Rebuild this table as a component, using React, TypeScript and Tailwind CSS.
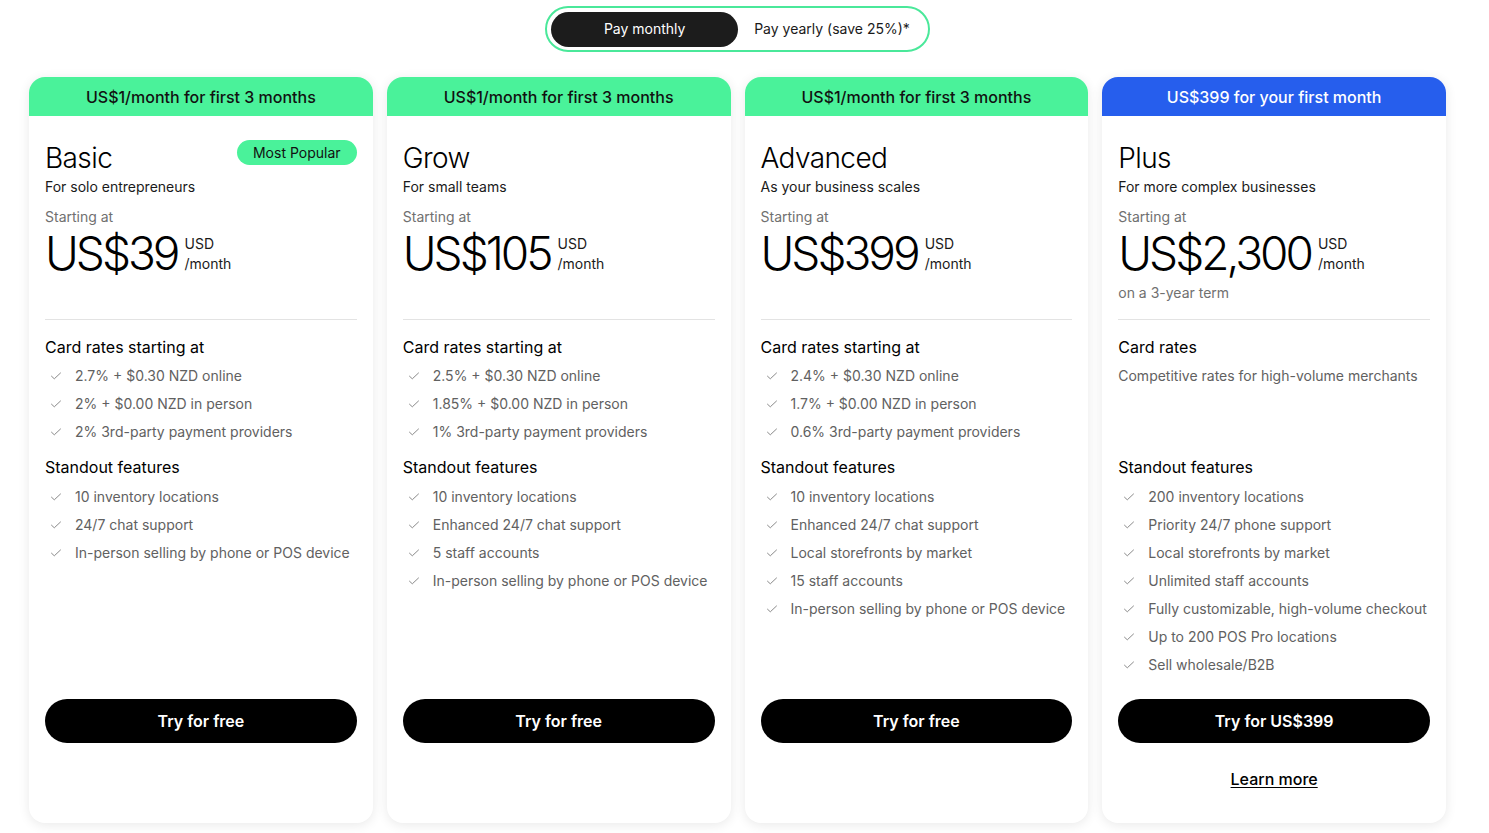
import type { ReactNode } from 'react';

interface Plan {
  banner: string;
  bannerBlue?: boolean;
  name: string;
  tagline: string;
  price: string;
  term?: string;
  popular?: boolean;
  ratesTitle: string;
  rates: string[];
  ratesNote?: string;
  features: string[];
  cta: string;
  learnMore?: boolean;
}

const PLANS: Plan[] = [
  {
    banner: 'US$1/month for first 3 months',
    name: 'Basic',
    tagline: 'For solo entrepreneurs',
    price: 'US$39',
    popular: true,
    ratesTitle: 'Card rates starting at',
    rates: ['2.7% + $0.30 NZD online', '2% + $0.00 NZD in person', '2% 3rd-party payment providers'],
    features: ['10 inventory locations', '24/7 chat support', 'In-person selling by phone or POS device'],
    cta: 'Try for free',
  },
  {
    banner: 'US$1/month for first 3 months',
    name: 'Grow',
    tagline: 'For small teams',
    price: 'US$105',
    ratesTitle: 'Card rates starting at',
    rates: ['2.5% + $0.30 NZD online', '1.85% + $0.00 NZD in person', '1% 3rd-party payment providers'],
    features: [
      '10 inventory locations',
      'Enhanced 24/7 chat support',
      '5 staff accounts',
      'In-person selling by phone or POS device',
    ],
    cta: 'Try for free',
  },
  {
    banner: 'US$1/month for first 3 months',
    name: 'Advanced',
    tagline: 'As your business scales',
    price: 'US$399',
    ratesTitle: 'Card rates starting at',
    rates: ['2.4% + $0.30 NZD online', '1.7% + $0.00 NZD in person', '0.6% 3rd-party payment providers'],
    features: [
      '10 inventory locations',
      'Enhanced 24/7 chat support',
      'Local storefronts by market',
      '15 staff accounts',
      'In-person selling by phone or POS device',
    ],
    cta: 'Try for free',
  },
  {
    banner: 'US$399 for your first month',
    bannerBlue: true,
    name: 'Plus',
    tagline: 'For more complex businesses',
    price: 'US$2,300',
    term: 'on a 3-year term',
    ratesTitle: 'Card rates',
    rates: [],
    ratesNote: 'Competitive rates for high-volume merchants',
    features: [
      '200 inventory locations',
      'Priority 24/7 phone support',
      'Local storefronts by market',
      'Unlimited staff accounts',
      'Fully customizable, high-volume checkout',
      'Up to 200 POS Pro locations',
      'Sell wholesale/B2B',
    ],
    cta: 'Try for US$399',
    learnMore: true,
  },
];

function Check() {
  return (
    <svg width="12" height="12" viewBox="0 0 12 12" fill="none" className="shrink-0 text-[#8a8a8a]">
      <path d="M1.5 6.2l2.8 2.6L10.5 3" stroke="currentColor" strokeWidth="1" strokeLinecap="round" strokeLinejoin="round" />
    </svg>
  );
}

function Item({ children }: { children: ReactNode }) {
  return (
    <li className="flex h-7 items-center pl-[5px] text-sm text-[#616161]">
      <Check />
      <span className="ml-[13px] whitespace-nowrap">{children}</span>
    </li>
  );
}

function PlanCard({ plan }: { plan: Plan }) {
  return (
    <div className="flex flex-col overflow-hidden rounded-2xl bg-white shadow-[0_2px_12px_rgba(0,0,0,0.09)]">
      <div
        className={
          plan.bannerBlue
            ? 'flex h-[39px] items-center justify-center bg-[#265eed] text-base font-medium text-white'
            : 'flex h-[39px] items-center justify-center bg-[#4af29a] text-base font-medium text-[#111]'
        }
      >
        {plan.banner}
      </div>

      <div className="flex flex-1 flex-col px-4 pt-6">
        <div className="flex items-start justify-between">
          <h2 className="text-[28px] leading-9 font-light tracking-[-0.6px] text-black">{plan.name}</h2>
          {plan.popular && (
            <span className="flex h-[25px] w-[120px] items-center justify-center rounded-full bg-[#4af29a] text-sm text-[#111]">
              Most Popular
            </span>
          )}
        </div>
        <p className="mt-px text-sm leading-5 text-[#1a1a1a]">{plan.tagline}</p>

        <div className="mt-[10px] h-[112px]">
          <p className="text-sm leading-5 text-[#707070]">Starting at</p>
          <div className="flex items-start">
            <span className="text-[46px] leading-[52px] font-light tracking-[-3px] text-black">{plan.price}</span>
            <div className="mt-[7px] ml-[7px] flex flex-col text-sm leading-5 text-[#1a1a1a]">
              <span>USD</span>
              <span>/month</span>
            </div>
          </div>
          {plan.term && <p className="mt-1 text-sm leading-5 text-[#707070]">{plan.term}</p>}
        </div>

        <div className="border-t border-[#e3e3e3]" />

        <div className="mt-[15px] h-[120px]">
          <h3 className="text-base leading-6 text-black">{plan.ratesTitle}</h3>
          {plan.ratesNote ? (
            <p className="mt-[3px] flex h-7 items-center text-sm text-[#616161]">{plan.ratesNote}</p>
          ) : (
            <ul className="mt-[3px]">
              {plan.rates.map((r) => (
                <Item key={r}>{r}</Item>
              ))}
            </ul>
          )}
        </div>

        <h3 className="text-base leading-6 text-black">Standout features</h3>
        <ul className="mt-1 flex-1">
          {plan.features.map((f) => (
            <Item key={f}>{f}</Item>
          ))}
        </ul>

        <button className="mt-5 h-11 w-full rounded-full bg-black text-base font-semibold text-white">
          {plan.cta}
        </button>
        <div className="h-20 pt-6 text-center">
          {plan.learnMore && (
            <a href="#" className="text-base leading-6 font-medium text-black underline underline-offset-2">
              Learn more
            </a>
          )}
        </div>
      </div>
    </div>
  );
}

export default function App() {
  return (
    <div className="min-h-screen w-[1475px] bg-white font-['Inter','Liberation_Sans',sans-serif] text-black">
      <div className="flex justify-center pt-[6px]">
        <div className="flex h-[46px] items-center rounded-full border-2 border-[#4ae89a] pr-[18px] pl-1">
          <button className="h-[35px] w-[187px] rounded-full bg-[#1c1c1c] text-sm text-white">Pay monthly</button>
          <button className="ml-4 text-sm text-[#1a1a1a]">Pay yearly (save 25%)*</button>
        </div>
      </div>

      <div className="mt-[25px] grid grid-cols-4 gap-[14px] px-[29px] pb-[10px]">
        {PLANS.map((p) => (
          <PlanCard key={p.name} plan={p} />
        ))}
      </div>
    </div>
  );
}
